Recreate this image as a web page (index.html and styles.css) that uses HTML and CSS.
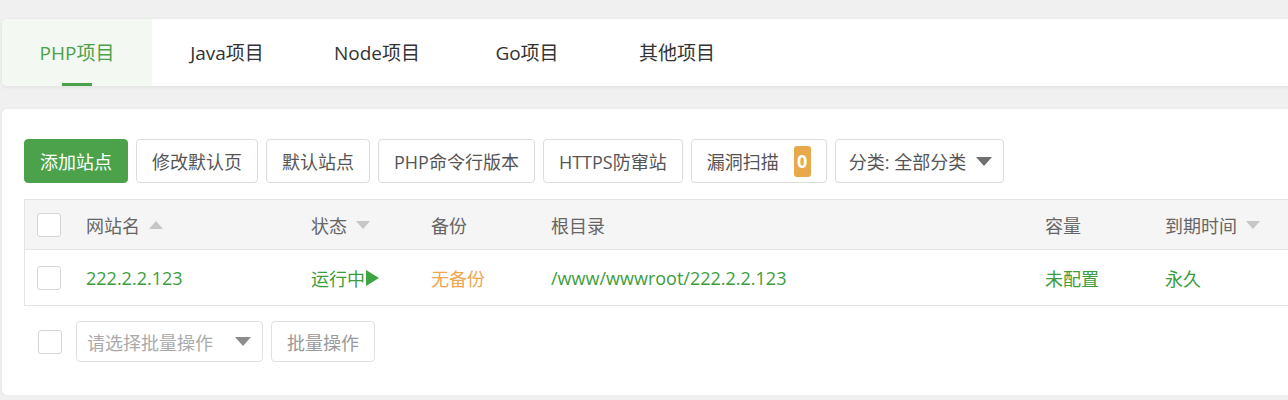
FILE: index.html
```html
<!DOCTYPE html>
<html lang="zh">
<head>
<meta charset="utf-8">
<link rel="stylesheet" href="styles.css">
</head>
<body>
<div class="page">
  <div class="card tabs">
    <div class="tab active">PHP项目</div>
    <div class="tab">Java项目</div>
    <div class="tab">Node项目</div>
    <div class="tab">Go项目</div>
    <div class="tab">其他项目</div>
  </div>

  <div class="card main">
    <div class="toolbar">
      <button class="btn primary">添加站点</button>
      <button class="btn">修改默认页</button>
      <button class="btn">默认站点</button>
      <button class="btn">PHP命令行版本</button>
      <button class="btn">HTTPS防窜站</button>
      <button class="btn scan">漏洞扫描<span class="badge">0</span></button>
      <button class="btn select-btn">分类: 全部分类<span class="caret dark"></span></button>
    </div>

    <div class="table">
      <div class="row head">
        <div class="cell chk"><span class="checkbox"></span></div>
        <div class="cell">网站名<span class="sort up"></span></div>
        <div class="cell">状态<span class="sort down"></span></div>
        <div class="cell">备份</div>
        <div class="cell">根目录</div>
        <div class="cell">容量</div>
        <div class="cell">到期时间<span class="sort down"></span></div>
      </div>
      <div class="row body">
        <div class="cell chk"><span class="checkbox"></span></div>
        <div class="cell green">222.2.2.123</div>
        <div class="cell green">运行中<span class="play"></span></div>
        <div class="cell orange">无备份</div>
        <div class="cell green">/www/wwwroot/222.2.2.123</div>
        <div class="cell green">未配置</div>
        <div class="cell green">永久</div>
      </div>
    </div>

    <div class="batch">
      <span class="checkbox"></span>
      <div class="batch-select">请选择批量操作<span class="caret light"></span></div>
      <button class="btn muted">批量操作</button>
    </div>
  </div>
</div>
</body>
</html>
```

FILE: styles.css
```css
html, body {
  margin: 0;
  padding: 0;
  background: #f0f0f0;
  overflow: hidden;
  height: 400px;
}

body {
  font-family: "Open Sans", "Noto Sans CJK SC", sans-serif;
  font-size: 18px;
  color: #333;
}

.page {
  padding: 19px 0 0 2px;
  overflow: hidden;
}

.card {
  background: #fff;
  border-radius: 5px;
  box-shadow: 0 1px 4px rgba(0, 0, 0, 0.07);
  margin-right: -20px;
}

.tabs {
  display: flex;
  height: 67px;
  overflow: hidden;
}

.tab {
  position: relative;
  width: 150px;
  display: flex;
  align-items: center;
  justify-content: center;
  padding-bottom: 2px;
  box-sizing: border-box;
  font-size: 19px;
  color: #333;
}

.tab.active {
  background: #f3f8f2;
  color: #4ba24b;
}

.tab.active::after {
  content: "";
  position: absolute;
  left: 60px;
  bottom: 0;
  width: 30px;
  height: 3px;
  background: #4ba24b;
}

.main {
  margin-top: 23px;
  height: 256px;
  padding: 30px 0 0 22px;
  overflow: hidden;
}

.toolbar {
  display: flex;
  gap: 8px;
}

.btn {
  height: 44px;
  padding: 0 15px;
  border: 1px solid #dcdcdc;
  border-radius: 4px;
  background: #fff;
  font-family: inherit;
  font-size: 18px;
  color: #555;
  display: inline-flex;
  align-items: center;
  box-sizing: border-box;
}

.btn.primary {
  background: #4ba24b;
  border-color: #4ba24b;
  color: #fff;
}

.badge {
  display: inline-flex;
  align-items: center;
  justify-content: center;
  margin-left: 15px;
  width: 17px;
  height: 31px;
  border-radius: 3px;
  background: #e8a84c;
  color: #fff;
  font-weight: bold;
  font-size: 18px;
}

.select-btn {
  padding: 0 11px 0 13px;
}

.caret {
  display: inline-block;
  width: 0;
  height: 0;
  border-left: 8px solid transparent;
  border-right: 8px solid transparent;
}

.caret.dark {
  border-top: 9px solid #707070;
  margin-left: 10px;
}

.caret.light {
  border-top: 9px solid #8c8c8c;
  margin-left: auto;
}

.table {
  margin-top: 16px;
  border: 1px solid #e4e4e4;
  border-right: none;
  width: 1400px;
}

.row {
  display: grid;
  grid-template-columns: 61px 225px 120px 120px 494px 120px 260px;
  align-items: center;
}

.row.head {
  height: 49px;
  background: #f5f5f5;
  border-bottom: 1px solid #e4e4e4;
  color: #666;
}

.row.body {
  height: 55px;
}

.cell {
  display: flex;
  align-items: center;
  white-space: nowrap;
}

.cell.chk {
  padding-left: 12px;
}

.checkbox {
  display: inline-block;
  width: 22px;
  height: 22px;
  border: 1px solid #d4d4d4;
  border-radius: 3px;
  background: #fff;
}

.sort {
  display: inline-block;
  width: 0;
  height: 0;
  margin-left: 9px;
  border-left: 7px solid transparent;
  border-right: 7px solid transparent;
}

.sort.up {
  border-bottom: 8px solid #c6c6c6;
}

.sort.down {
  border-top: 8px solid #c6c6c6;
}

.green {
  color: #3c9d3c;
}

.orange {
  color: #f0a54f;
}

.play {
  display: inline-block;
  width: 0;
  height: 0;
  border-top: 8px solid transparent;
  border-bottom: 8px solid transparent;
  border-left: 13px solid #3fa33f;
  margin-left: 1px;
}

.batch {
  display: flex;
  align-items: center;
  margin-top: 15px;
  padding-left: 14px;
}

.batch-select {
  display: flex;
  align-items: center;
  box-sizing: border-box;
  width: 187px;
  height: 41px;
  margin-left: 14px;
  padding: 0 11px 0 10px;
  border: 1px solid #e0e0e0;
  border-radius: 4px;
  color: #aaa;
}

.btn.muted {
  height: 41px;
  margin-left: 8px;
  color: #999;
  border-color: #e0e0e0;
}
```
